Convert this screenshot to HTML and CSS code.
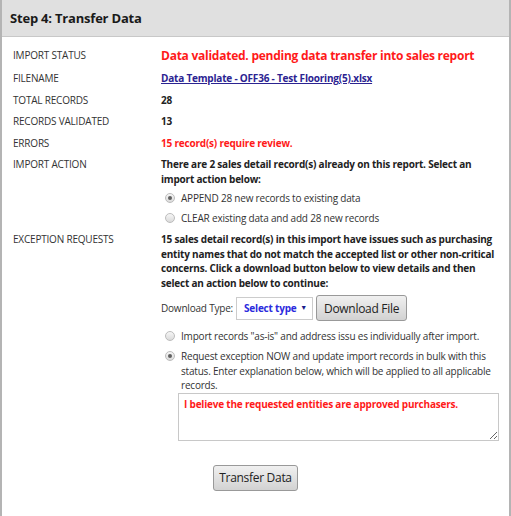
FILE: index.html
```html
<!DOCTYPE html>
<html lang="en">
<head>
    <meta charset="UTF-8">
    <meta name="viewport" content="width=device-width, initial-scale=1.0">
    <title>Step 4: Transfer Data</title>
    <link rel="stylesheet" href="styles.css">
</head>
<body>

    <div class="panel">
        <div class="panel-header">Step 4: Transfer Data</div>

        <div class="panel-body">
            <div class="field-row">
                <div class="field-label">Import Status</div>
                <div class="field-value status-text">Data validated. pending data transfer into sales report</div>
            </div>

            <div class="field-row">
                <div class="field-label">Filename</div>
                <div class="field-value"><a href="#" class="file-link">Data Template - OFF36 - Test Flooring(5).xlsx</a></div>
            </div>

            <div class="field-row">
                <div class="field-label">Total Records</div>
                <div class="field-value">28</div>
            </div>

            <div class="field-row">
                <div class="field-label">Records Validated</div>
                <div class="field-value">13</div>
            </div>

            <div class="field-row">
                <div class="field-label">Errors</div>
                <div class="field-value error-text">15 record(s) require review.</div>
            </div>

            <div class="field-row">
                <div class="field-label">Import Action</div>
                <div class="field-value">
                    <div>There are 2 sales detail record(s) already on this report. Select an import action below:</div>
                    <div class="radio-list">
                        <label class="radio-item"><input type="radio" name="action" checked><span>APPEND 28 new records to existing data</span></label>
                        <label class="radio-item"><input type="radio" name="action"><span>CLEAR existing data and add 28 new records</span></label>
                    </div>
                </div>
            </div>

            <div class="field-row">
                <div class="field-label">Exception Requests</div>
                <div class="field-value">
                    <div>15 sales detail record(s) in this import have issues such as purchasing entity names that do not match the accepted list or other non-critical concerns. Click a download button below to view details and then select an action below to continue:</div>

                    <div class="download-row">
                        <span class="download-label">Download Type:</span>
                        <div class="select-box">Select type <span class="select-arrow">&#9660;</span></div>
                        <button class="btn">Download File</button>
                    </div>

                    <div class="radio-list exception-list">
                        <label class="radio-item"><input type="radio" name="exception"><span>Import records "as-is" and address issu es individually after import.</span></label>
                        <label class="radio-item"><input type="radio" name="exception" checked><span>Request exception NOW and update import records in bulk with this status. Enter explanation below, which will be applied to all applicable records.</span></label>
                    </div>

                    <textarea class="explanation">I believe the requested entities are approved purchasers.</textarea>
                </div>
            </div>

            <div class="submit-row">
                <button class="btn btn-transfer">Transfer Data</button>
            </div>
        </div>
    </div>

</body>
</html>
```

FILE: styles.css
```css
body {
    margin: 0;
    font-family: 'Open Sans', 'Liberation Sans', sans-serif;
    background-color: #ffffff;
    color: #333333;
}

.panel {
    width: 507px;
    min-height: 516px;
    border-left: 2px solid #b4b4b4;
    border-right: 2px solid #b4b4b4;
}

.panel-header {
    background-color: #e0e0e0;
    border-bottom: 1px solid #c8c8c8;
    height: 36px;
    line-height: 37px;
    padding-left: 8px;
    font-size: 13px;
    letter-spacing: -0.2px;
    font-weight: bold;
    color: #1a1a1a;
}

.panel-body {
    padding-top: 11px;
}

.field-row {
    display: grid;
    grid-template-columns: 148px 1fr;
    padding-left: 11px;
    padding-right: 22px;
    margin-bottom: 7px;
    font-size: 10px;
    letter-spacing: -0.2px;
    line-height: 14.5px;
}

.field-label {
    text-transform: uppercase;
    color: #333333;
}

.field-value {
    font-weight: bold;
    color: #222222;
}

.status-text {
    color: #ff1a1a;
    font-size: 12px;
    letter-spacing: -0.25px;
    line-height: 16px;
    white-space: nowrap;
}

.error-text {
    color: #ff1a1a;
}

.file-link {
    color: #2b2391;
}

.radio-list {
    display: flex;
    flex-direction: column;
    gap: 5.5px;
    margin-top: 4.5px;
}

.radio-item {
    display: flex;
    align-items: flex-start;
    font-weight: normal;
    color: #333333;
}

.radio-item input {
    appearance: none;
    -webkit-appearance: none;
    width: 10px;
    height: 10px;
    margin: 2px 6px 0 4px;
    border: 1px solid #bcbcbc;
    border-radius: 50%;
    background: linear-gradient(#f6f6f6, #dadada);
    flex-shrink: 0;
    position: relative;
}

.radio-item input:checked::after {
    content: '';
    position: absolute;
    top: 2px;
    left: 2px;
    width: 4px;
    height: 4px;
    border-radius: 50%;
    background-color: #606060;
}

.download-row {
    display: flex;
    align-items: center;
    margin-top: 5px;
    font-weight: normal;
}

.download-label {
    color: #333333;
    margin-right: 3px;
}

.select-box {
    width: 77px;
    height: 23px;
    border: 1px solid #cccccc;
    background-color: #ffffff;
    color: #2b2bdd;
    font-weight: bold;
    white-space: nowrap;
    display: flex;
    align-items: center;
    justify-content: space-between;
    padding: 0 5px 0 7px;
    box-sizing: border-box;
    margin-right: 3px;
}

.select-arrow {
    font-size: 7px;
    color: #1a1a8a;
}

.btn {
    font-family: 'Open Sans', 'Liberation Sans', sans-serif;
    font-size: 12px;
    letter-spacing: -0.3px;
    color: #222222;
    background: linear-gradient(#f0f0f0, #d2d2d2);
    border: 1px solid #999999;
    border-radius: 3px;
    padding: 0 7px;
    height: 26px;
    cursor: pointer;
}

.exception-list {
    margin-top: 8px;
}

.explanation {
    display: block;
    width: 321px;
    height: 48px;
    margin: 0 0 0 17px;
    padding: 3px 5px;
    box-sizing: border-box;
    border: 1px solid #c8c8c8;
    resize: both;
    font-family: 'Open Sans', 'Liberation Sans', sans-serif;
    font-size: 10px;
    letter-spacing: -0.2px;
    font-weight: bold;
    color: #ff1a1a;
}

.submit-row {
    padding-left: 211px;
    padding-top: 17px;
}

.btn-transfer {
    width: 85px;
    padding: 0;
}
```
